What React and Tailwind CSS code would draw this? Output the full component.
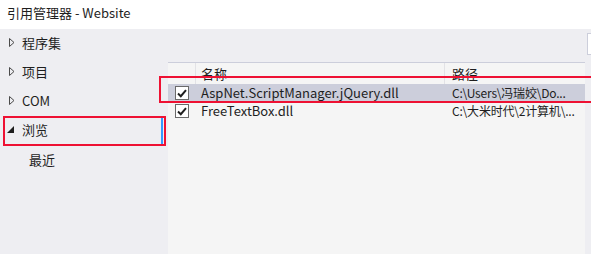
import React from 'react';

const font = { fontFamily: '"Noto Sans CJK SC", "Noto Sans", sans-serif' };

const Collapsed = () => (
  <svg width="6" height="9" viewBox="0 0 6 9" className="shrink-0">
    <polygon points="0.5,0.5 5,4.5 0.5,8.5" fill="none" stroke="#4a4a4a" strokeWidth="1" />
  </svg>
);

const Expanded = () => (
  <svg width="7" height="7" viewBox="0 0 7 7" className="shrink-0">
    <polygon points="7,0 7,7 0,7" fill="#1e1e1e" />
  </svg>
);

const Check = () => (
  <div className="w-[14px] h-[14px] bg-white border border-[#6a6a6a] flex items-center justify-center">
    <svg width="10" height="9" viewBox="0 0 10 9">
      <path d="M1 4.5 L3.8 7.2 L9 1.2" fill="none" stroke="#1e1e1e" strokeWidth="2" />
    </svg>
  </div>
);

const navItems = [
  { label: '程序集' },
  { label: '项目' },
  { label: 'COM' },
  { label: '浏览', open: true },
];

const rows = [
  { name: 'AspNet.ScriptManager.jQuery.dll', path: 'C:\\Users\\冯瑞姣\\Do...', selected: true },
  { name: 'FreeTextBox.dll', path: 'C:\\大米时代\\2计算机\\...' },
];

export default function App() {
  return (
    <div className="relative w-[591px] h-[254px] overflow-hidden bg-[#eeeef2] text-[#1e1e1e] text-[13px] flex flex-col" style={font}>
      {/* title bar */}
      <div className="h-[29px] bg-white flex items-center pl-[7px] pb-[3px]">引用管理器 - Website</div>

      <div className="flex-1 flex min-h-0">
        {/* left nav */}
        <div className="w-[168px] shrink-0 flex flex-col">
          {navItems.map((it) => (
            <div
              key={it.label}
              className={`h-[29px] flex items-center pb-[2px] ${it.open ? 'pl-[7px] gap-[8px] border-r-2 border-[#3399ff] mr-[5px]' : 'pl-[9px] gap-[7px]'}`}
            >
              {it.open ? <Expanded /> : <Collapsed />}
              <span>{it.label}</span>
            </div>
          ))}
          <div className="h-[32px] flex items-center pl-[29px] pb-[2px]">最近</div>
        </div>

        {/* main */}
        <div className="flex-1 min-w-0 flex flex-col">
          <div className="h-[33px] flex justify-end items-start pt-[4px]">
            <div className="w-[4px] h-[22px] bg-white border-l border-y border-[#cccedb]" />
          </div>
          <div className="flex-1 mr-[6px] bg-[#f5f5f5] border-t border-[#cccedb]">
            <div className="grid grid-cols-[28px_249px_minmax(0,1fr)] h-[21px]">
              <div className="border-r border-[#e2e2e6]" />
              <div className="border-r border-[#e2e2e6] pl-[5px] flex items-center">名称</div>
              <div className="pl-[7px] flex items-center">路径</div>
            </div>
            {rows.map((r) => (
              <div
                key={r.name}
                className={`grid grid-cols-[28px_249px_minmax(0,1fr)] h-[18px] items-center ${r.selected ? 'bg-[#cccedb]' : ''}`}
              >
                <div className="pl-[7px]"><Check /></div>
                <div className="pl-[5px] whitespace-nowrap overflow-hidden">{r.name}</div>
                <div className="pl-[7px] whitespace-nowrap text-[12px] tracking-[-0.2px]">{r.path}</div>
              </div>
            ))}
          </div>
        </div>
      </div>

      {/* red annotation boxes */}
      <div className="absolute left-[3px] top-[116px] w-[163px] h-[30px] border-2 border-[#ee1133]" />
      <div className="absolute left-[159px] top-[76px] w-[450px] h-[27px] border-2 border-[#ee1133]" />
    </div>
  );
}
